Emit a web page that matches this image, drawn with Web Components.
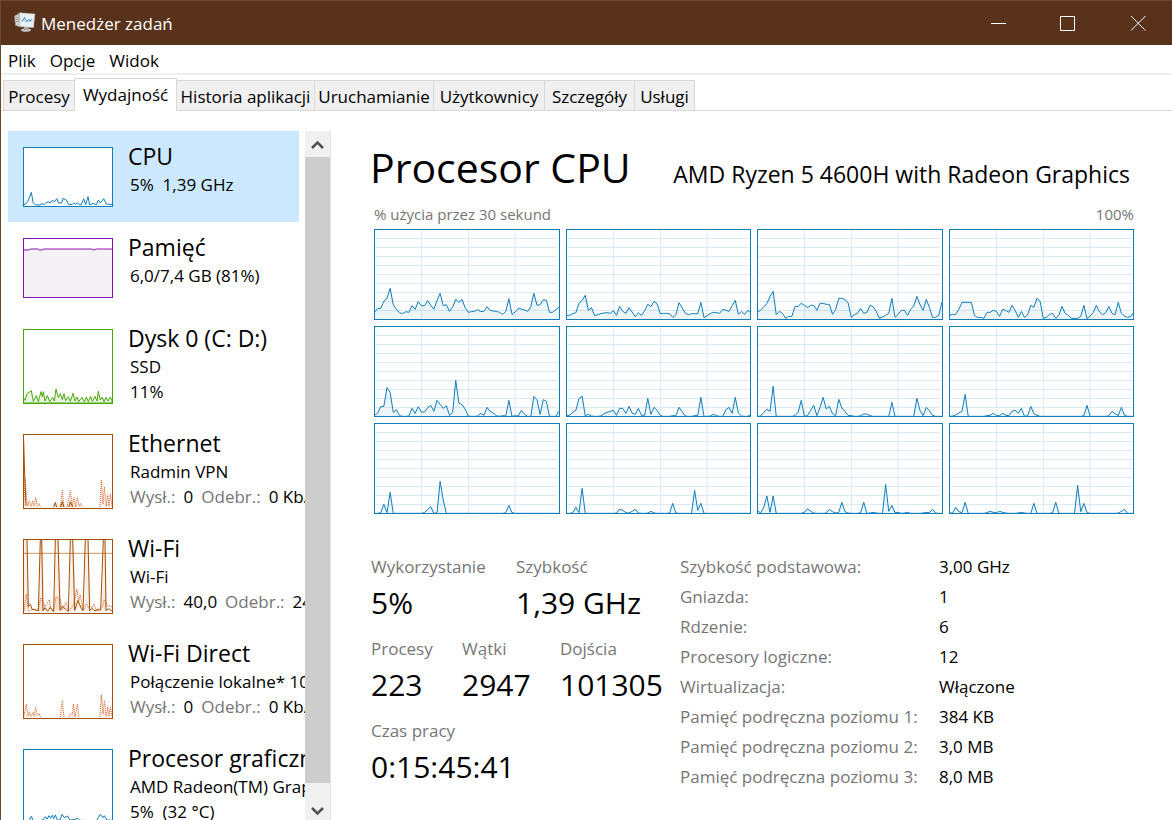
<!DOCTYPE html>
<html lang="pl">
<head>
<meta charset="utf-8">
<title>Menedżer zadań</title>
<style>
  html, body { height: 100%; }
  body { margin: 0; background: #fff; color: #000; font: 17px/24px "Open Sans", "Noto Sans", sans-serif; overflow: hidden; }
</style>
</head>
<body>
<task-manager></task-manager>

<script>
const define = (name, html, setup) => {
  const template = document.createElement('template');
  template.innerHTML = html;
  customElements.define(name, class extends HTMLElement {
    constructor() {
      super();
      this.attachShadow({ mode: 'open' }).append(template.content.cloneNode(true));
    }
    connectedCallback() { if (setup) setup(this, this.shadowRoot); }
  });
};

/* Title bar with the window buttons */
define('title-bar', `
<style>
  :host { display: flex; align-items: center; box-sizing: border-box; height: 45px; padding-left: 13px; border-top: 1px solid #6b4732; background: #58321b; color: #fff; flex: none; }
  .icon { width: 22px; height: 22px; margin-right: 5px; }
  .name { flex: 1; line-height: 26px; padding-top: 2px; }
  button { width: 70px; height: 44px; border: 0; padding: 0; background: none; color: inherit; display: grid; place-items: center; }
  button svg { width: 17px; height: 17px; fill: none; stroke: currentColor; }
</style>
<svg class="icon" viewBox="0 0 22 22" aria-hidden="true">
  <path d="M.5 4 5 1.500 7 15 1.500 13.500z" fill="#d3d2d0" stroke="#8e8a86" stroke-width=".6"/>
  <path d="M1.500 5.500h3M2 7.500h3M2 9.500h3" stroke="#8a8a88" stroke-width=".8"/>
  <ellipse cx="12" cy="18" rx="5" ry="1.800" fill="#c4c4c2"/>
  <path d="M10 14.500h4.500v3.500H10z" fill="#a5a5a3"/>
  <path d="M5.500.8 20.800 2 19.500 15.500 6 14.500z" fill="#f1f1f0" stroke="#bdbdbb" stroke-width=".6"/>
  <path d="m7 2.300 12.300 1L18.300 14 7.300 13z" fill="#e3f1fa"/>
  <path d="m7.500 9 1.500-.5L10.500 5.500l2 4.500 2-2.500 1.500 2 1-2 1.300 1" fill="none" stroke="#3f8cc0"/>
</svg>
<span class="name"><slot></slot></span>
<button aria-label="Minimalizuj"><svg viewBox="0 0 17 17"><path d="M2 8.500h15"/></svg></button>
<button aria-label="Maksymalizuj"><svg viewBox="0 0 17 17"><path d="M1.500 1.500h14v14h-14z"/></svg></button>
<button aria-label="Zamknij"><svg viewBox="0 0 17 17"><path d="m2 1 14.500 14.500M16.500 1 2 15.500"/></svg></button>
`);

/* Menu */
define('menu-bar', `
<style>
  :host { display: flex; box-sizing: border-box; height: 30px; padding-left: 7px; gap: 14px; border-bottom: 2px solid #f0f0f0; flex: none; }
  button { border: 0; padding: 0; background: none; font: inherit; line-height: 32px; color: inherit; }
</style>
<button>Plik</button><button>Opcje</button><button>Widok</button>
`);

/* Tab strip */
define('tab-strip', `
<style>
  :host { display: grid; grid-template-columns: 71px 103px 137px 119px 111px 90px 61px; align-items: end; box-sizing: border-box; height: 36px; padding-left: 2px; border-bottom: 1px solid #d9d9d9; flex: none; }
  button { height: 30px; margin: 0; padding: 0; border: 1px solid #d9d9d9; border-width: 1px 0 0 1px; background: #f0f0f0; font: inherit; line-height: 31px; color: inherit; white-space: nowrap; }
  button:last-child { border-right-width: 1px; }
  button[aria-selected="true"] { height: 33px; margin-bottom: -1px; border-right-width: 1px; background: #fff; line-height: 30px; }
  button[aria-selected="true"] + button { border-left: 0; }
</style>
<button role="tab">Procesy</button><button role="tab" aria-selected="true">Wydajność</button><button role="tab">Historia aplikacji</button><button role="tab">Uruchamianie</button><button role="tab">Użytkownicy</button><button role="tab">Szczegóły</button><button role="tab">Usługi</button>
`);

/* One logical processor: sixty samples over a grid */
define('core-chart', `
<style>
  :host { display: block; box-sizing: border-box; height: 91px; border: 1px solid #117dbb; background: #fff; }
  svg { display: block; width: 100%; height: 100%; }
  path { vector-effect: non-scaling-stroke; fill: none; }
  .grid { stroke: #d9eaf4; shape-rendering: crispEdges; }
  .area { fill: #117dbb; fill-opacity: .07; }
  .line { stroke: #117dbb; }
</style>
<svg viewBox="3 3 549 267" preserveAspectRatio="none" role="img" aria-label="Użycie procesora">
  <path class="grid"/><path class="area"/><path class="line"/>
</svg>
`, (host, root) => {
  const values = host.getAttribute('values').split(' ').map(Number);
  const points = values.map((v, i) => (1.5 + i * 9.35).toFixed(1) + ' ' + (271 - v));
  let grid = '';
  for (let y = 28.5; y < 260; y += 27) grid += 'M3 ' + y + 'H549';
  for (const x of [142.5, 283.5, 421.5]) grid += 'M' + x + ' 3V270';
  root.querySelector('.grid').setAttribute('d', grid);
  root.querySelector('.line').setAttribute('d', 'M' + points.join('L'));
  root.querySelector('.area').setAttribute('d', 'M1.5 272L' + points.join('L') + 'L553 272Z');
});

/* Sidebar entry: thumbnail chart slot, title and detail lines */
define('resource-item', `
<style>
  :host { display: block; height: 105px; }
  :host([short]) { height: 91px; }
  button { display: grid; grid-template-columns: 90px 1fr; column-gap: 15px; align-items: start; width: 100%; height: 100%; padding: 10px 0 0 15px; border: 0; background: none; font: inherit; color: inherit; text-align: left; white-space: nowrap; }
  :host([selected]) button { background: #cce8ff; }
  .chart { box-sizing: border-box; height: 75px; margin-top: 6px; border: 1px solid var(--tone); background: #fff; color: var(--tone); }
  :host([short]) .chart { height: 60px; }
  .text { display: block; min-width: 0; }
  .title { display: block; font-size: 23px; line-height: 31px; }
  .lines { display: block; padding-left: 2px; line-height: 25px; }
</style>
<button>
  <span class="chart"><slot name="chart"></slot></span>
  <span class="text"><span class="title"><slot name="title"></slot></span><span class="lines"><slot></slot></span></span>
</button>
`);

define('scroll-rail', `
<style>
  :host { display: flex; flex-direction: column; width: 25px; background: #f0f0f0; border-right: 1px solid #e3e3e3; flex: none; }
  button { height: 26px; padding: 0; border: 0; background: none; display: grid; place-items: center; flex: none; }
  button:last-child { height: 37px; padding-top: 20px; align-items: start; }
  .thumb { flex: 1; background: #cdcdcd; }
  svg { width: 13px; height: 13px; fill: none; stroke: #505050; stroke-width: 2.500; }
</style>
<button aria-label="W górę"><svg viewBox="0 0 13 13"><path d="m1 10 5.500-5.500L12 10"/></svg></button>
<span class="thumb"></span>
<button aria-label="W dół"><svg viewBox="0 0 13 13"><path d="m1 5 5.500 5.500L12 5"/></svg></button>
`);

define('resource-list', `
<style>
  :host { display: flex; flex: none; padding-top: 20px; padding-left: 7px; min-height: 0; }
  .items { width: 291px; padding-right: 6px; overflow: hidden; }
  svg { display: block; width: 100%; height: 100%; fill: none; stroke: currentColor; }
  path { vector-effect: non-scaling-stroke; }
  .fill { stroke: none; fill: currentColor; fill-opacity: .09; }
  .mem .fill { fill: #f4f2f4; fill-opacity: 1; }
  .dots { stroke: #d9622b; stroke-dasharray: 1 1; fill: #d9622b; fill-opacity: .1; }
  .cpu { --tone: #117dbb; } .mem { --tone: #8b12ae; } .disk { --tone: #4da60c; } .net { --tone: #a74f01; }
  .dim { color: #767676; }
  .row { display: block; }
  .rates { display: flex; gap: 8px; }
</style>
<div class="items">
  <resource-item class="cpu" short selected>
    <svg slot="chart" viewBox="3 3 264 174" preserveAspectRatio="none" aria-hidden="true"><path d="M0 174 8 171 15 162 25 136 30 166 38 174 51 174 57 170 63 173 70 166 77 165 82 168 88 160 95 164 101 155 107 168 116 168 120 154 130 159 137 172 147 173 152 168 157 172 163 167 168 173 175 173 182 155 188 173 195 149 200 174 210 169 220 173 226 159 232 168 242 155 250 171 268 173"/></svg>
    <span slot="title">CPU</span><span class="row">5%&nbsp; 1,39 GHz</span>
  </resource-item>
  <resource-item class="mem" short>
    <svg slot="chart" viewBox="3 3 264 174" preserveAspectRatio="none" aria-hidden="true"><path class="fill" d="M0 34H268V180H0Z"/><path d="M0 36H18L22 33 45 33 50 36 56 36 62 33H206L212 36 220 33H268"/></svg>
    <span slot="title">Pamięć</span><span class="row">6,0/7,4 GB (81%)</span>
  </resource-item>
  <resource-item class="disk">
    <svg slot="chart" viewBox="3 3 264 219" preserveAspectRatio="none" aria-hidden="true"><path fill="#4da60c" fill-opacity=".12" d="M0 205 6 214 12 194 25 185 31 217 40 200 46 218 54 188 58 203 61 188 66 216 73 200 80 218 89 205 94 216 99 180 106 206 112 194 118 212 123 194 128 215 136 203 142 217 150 193 156 216 162 204 167 218 177 205 184 218 190 204 196 218 203 202 208 217 216 202 222 216 226 187 232 213 238 204 243 218 249 205 255 216 262 204 267 215V222H0Z"/></svg>
    <span slot="title">Dysk 0 (C: D:)</span><span class="row">SSD</span><span class="row">11%</span>
  </resource-item>
  <resource-item class="net">
    <svg slot="chart" viewBox="3 3 264 219" preserveAspectRatio="none" aria-hidden="true"><path class="dots" d="M2 219 6 130 10 180 14 216 19 200 24 217 29 200 33 216 38 190 43 215 48 208 53 219M112 219 118 170 123 219M132 219 142 170 148 215 153 190 158 219 163 190 168 216 173 208 178 219M231 219 235 137 240 210 244 158 250 217 254 182 258 217 262 180 267 217"/><path fill="#a74f01" fill-opacity=".2" d="M2 20 5 120 9 215M92 219 97 205 101 219M113 219 118 203 123 219M137 219 142 203 149 219"/></svg>
    <span slot="title">Ethernet</span><span class="row">Radmin VPN</span><span class="rates"><span class="dim">Wysł.:</span><span>0</span><span class="dim">Odebr.:</span><span>0 Kb/s</span></span>
  </resource-item>
  <resource-item class="net">
    <svg slot="chart" viewBox="3 3 264 219" preserveAspectRatio="none" aria-hidden="true"><path class="fill" d="M3 0H13L17 205 3 219ZM51 0H60L65 215 47 219ZM97 0H108L116 216 97 219ZM142 0H152L161 216 142 219ZM186 0H196L204 217 186 219ZM242 0H248L252 216 237 219Z"/><path stroke-opacity=".6" d="M0 43H268"/><path class="dots" d="M2 216 10 165 17 217 30 210 44 214 54 176 60 190 66 203 79 182 83 207 92 216 99 173 112 181 117 214 129 190 137 216 151 198 162 150 167 185 172 167 181 213 190 195 199 207 207 206 214 195 220 217 237 205 243 182 254 199 267 203"/><path d="M12 0 16 203 22 196 27 211 39 213 46 216 52 0M56 0 60 216 66 206 74 217 82 205 92 219 97 0M105 0 111 214 119 201 127 211 136 217 142 0M149 0 155 214 165 184 173 204 180 216 187 0M195 0 200 216 206 208 216 216 223 211 233 214 241 0M246 0 249 215 257 209 267 216"/></svg>
    <span slot="title">Wi-Fi</span><span class="row">Wi-Fi</span><span class="rates"><span class="dim">Wysł.:</span><span>40,0</span><span class="dim">Odebr.:</span><span>24,0 Kb/s</span></span>
  </resource-item>
  <resource-item class="net">
    <svg slot="chart" viewBox="3 3 264 219" preserveAspectRatio="none" aria-hidden="true"><path class="dots" d="M2 219 10 180 15 216 19 203 24 217 29 205 33 216 38 190 43 215 48 208 53 219M112 219 118 170 123 219M137 219 143 208 148 212 151 180 156 219 163 180 168 219M231 219 235 153 240 210 244 170 250 217 254 188 258 217 262 188 267 217"/></svg>
    <span slot="title">Wi-Fi Direct</span><span class="row">Połączenie lokalne* 10</span><span class="rates"><span class="dim">Wysł.:</span><span>0</span><span class="dim">Odebr.:</span><span>0 Kb/s</span></span>
  </resource-item>
  <resource-item class="cpu">
    <svg slot="chart" viewBox="3 3 264 219" preserveAspectRatio="none" aria-hidden="true"><path d="M0 219 16 219 25 202 32 218 60 213 67 203 72 210 78 200 83 208 88 199 92 209 97 198 103 213 111 213 117 196 124 206 134 201 140 213 156 212 163 207 170 214 220 215 232 196 240 206 244 200 252 213 268 214"/></svg>
    <span slot="title">Procesor graficzny 0</span><span class="row">AMD Radeon(TM) Graphics</span><span class="row">5%&nbsp; (32 °C)</span>
  </resource-item>
</div>
<scroll-rail></scroll-rail>
`);

/* Label over a large value */
define('big-stat', `
<style>
  :host { display: block; white-space: nowrap; }
  .label { color: #767676; line-height: 24px; }
  .value { font-size: 30px; line-height: 48px; }
</style>
<div class="label"><slot name="label"></slot></div>
<div class="value"><slot></slot></div>
`);

define('cpu-details', `
<style>
  :host { display: grid; grid-template-columns: 309px 1fr; }
  .big { display: grid; gap: 10px; align-content: start; padding-top: 3px; }
  .pair { display: grid; grid-template-columns: 145px 1fr; }
  .triple { display: grid; grid-template-columns: 91px 98px 1fr; }
  table { border-collapse: collapse; justify-self: start; align-self: start; }
  th, td { padding: 0; height: 30px; text-align: left; font-weight: 400; white-space: nowrap; }
  th { width: 259px; color: #767676; }
</style>
<div class="big">
  <div class="pair">
    <big-stat><span slot="label">Wykorzystanie</span>5%</big-stat>
    <big-stat><span slot="label">Szybkość</span>1,39 GHz</big-stat>
  </div>
  <div class="triple">
    <big-stat><span slot="label">Procesy</span>223</big-stat>
    <big-stat><span slot="label">Wątki</span>2947</big-stat>
    <big-stat><span slot="label">Dojścia</span>101305</big-stat>
  </div>
  <big-stat><span slot="label">Czas pracy</span>0:15:45:41</big-stat>
</div>
<table>
  <tr><th scope="row">Szybkość podstawowa:</th><td>3,00 GHz</td></tr>
  <tr><th scope="row">Gniazda:</th><td>1</td></tr>
  <tr><th scope="row">Rdzenie:</th><td>6</td></tr>
  <tr><th scope="row">Procesory logiczne:</th><td>12</td></tr>
  <tr><th scope="row">Wirtualizacja:</th><td>Włączone</td></tr>
  <tr><th scope="row">Pamięć podręczna poziomu 1:</th><td>384 KB</td></tr>
  <tr><th scope="row">Pamięć podręczna poziomu 2:</th><td>3,0 MB</td></tr>
  <tr><th scope="row">Pamięć podręczna poziomu 3:</th><td>8,0 MB</td></tr>
</table>
`);

define('cpu-page', `
<style>
  :host { display: block; flex: 1; min-width: 0; padding: 20px 38px 0 39px; }
  header { display: flex; justify-content: space-between; align-items: baseline; padding-right: 4px; white-space: nowrap; }
  h1 { margin: 0; font-size: 41px; line-height: 72px; font-weight: 400; }
  .model { font-size: 23px; }
  .axis { display: flex; justify-content: space-between; padding: 0 0 4px 4px; font-size: 15px; line-height: 22px; color: #767676; }
  .cores { display: grid; grid-template-columns: repeat(4, 1fr); gap: 6px; padding: 0 0 38px 4px; }
  cpu-details { padding-left: 1px; }
</style>
<header><h1>Procesor CPU</h1><span class="model">AMD Ryzen 5 4600H with Radeon Graphics</span></header>
<div class="axis"><span>% użycia przez 30 sekund</span><span>100%</span></div>
<div class="cores">
  <core-chart values="21 33 33 54 64 93 44 30 20 17 23 21 41 30 53 41 41 56 42 30 57 78 41 44 24 37 60 51 60 35 21 23 24 29 23 24 38 27 25 24 21 15 24 62 15 22 33 31 28 24 38 78 42 44 59 57 21 21 29 36"></core-chart>
  <core-chart values="12 12 17 20 48 57 72 27 35 11 14 17 19 20 18 26 12 39 24 18 35 22 8 20 12 26 45 38 54 47 17 18 18 17 6 14 50 35 19 14 17 17 17 51 5 11 17 21 20 18 30 27 24 41 57 15 24 15 27 20"></core-chart>
  <core-chart values="21 28 37 48 68 84 14 24 18 3 9 9 39 39 48 42 35 42 42 27 48 48 45 45 15 30 63 63 59 50 6 14 18 33 18 21 42 38 24 3 7 12 18 63 6 15 27 27 12 30 40 69 44 27 60 36 6 6 12 51"></core-chart>
  <core-chart values="12 15 15 30 51 51 51 51 11 6 6 3 21 21 27 24 9 30 27 21 42 27 6 24 6 14 42 36 63 54 3 6 15 18 3 12 39 18 12 3 3 3 9 42 2 10 20 42 22 14 20 39 18 14 51 18 10 6 9 22"></core-chart>
  <core-chart values="3 9 29 30 86 72 12 20 2 0 0 1 24 9 29 13 13 26 33 15 48 36 24 32 3 12 108 40 35 22 1 0 0 1 9 3 27 15 10 2 0 2 1 48 0 2 1 18 6 0 0 60 50 6 50 45 0 0 0 15"></core-chart>
  <core-chart values="3 3 12 18 54 60 2 6 1 0 0 1 8 12 15 18 3 24 24 9 30 10 6 24 3 3 54 6 27 18 3 0 0 0 2 2 27 14 1 0 0 2 3 57 0 0 1 6 2 0 0 20 27 9 57 10 1 0 0 6"></core-chart>
  <core-chart values="0 1 12 21 15 90 0 0 0 0 0 0 2 12 48 0 2 18 33 2 27 57 22 30 8 2 51 25 14 3 2 0 0 2 7 7 2 0 0 0 0 0 0 42 0 0 0 0 0 0 0 54 18 2 27 17 3 0 0 0"></core-chart>
  <core-chart values="0 1 4 10 15 66 0 0 0 0 0 0 2 3 9 2 2 9 3 2 15 18 9 24 0 2 30 8 3 0 0 0 0 0 0 0 0 0 0 0 0 0 0 2 33 0 0 0 0 0 0 2 15 8 2 27 3 0 0 0"></core-chart>
  <core-chart values="0 0 2 27 2 63 0 0 0 0 0 0 0 0 0 0 2 12 20 0 2 96 40 0 0 0 0 0 0 0 0 0 0 0 0 0 0 0 0 0 0 0 2 24 2 0 0 0 0 0 0 0 0 0 0 0 0 0 0 0"></core-chart>
  <core-chart values="0 0 2 18 2 75 0 0 0 0 0 0 0 0 0 0 1 12 9 2 1 6 12 1 0 0 1 6 1 0 0 0 0 1 30 1 0 0 0 0 0 69 9 30 0 0 0 0 0 0 0 0 0 0 0 0 0 0 0 0"></core-chart>
  <core-chart values="8 1 18 52 3 52 0 0 0 0 0 0 0 0 0 3 14 6 1 0 0 0 1 12 5 1 3 33 5 1 0 0 0 2 33 0 1 3 1 0 0 87 6 24 2 3 0 1 3 0 0 0 0 1 3 2 12 1 0 0"></core-chart>
  <core-chart values="1 1 18 5 2 33 0 0 0 0 0 0 2 6 3 2 6 3 1 0 0 0 1 3 1 0 0 30 0 0 0 0 0 2 33 0 0 0 0 0 0 84 5 30 2 0 0 0 0 0 0 0 0 0 1 6 12 0 0 0"></core-chart>
</div>
<cpu-details></cpu-details>
`);

define('task-manager', `
<style>
  :host { display: flex; flex-direction: column; box-sizing: border-box; height: 100vh; border-left: 1px solid #6b4732; }
  main { display: flex; flex: 1; min-height: 0; }
</style>
<title-bar>Menedżer zadań</title-bar>
<menu-bar></menu-bar>
<tab-strip></tab-strip>
<main><resource-list></resource-list><cpu-page></cpu-page></main>
`);
</script>
</body>
</html>
